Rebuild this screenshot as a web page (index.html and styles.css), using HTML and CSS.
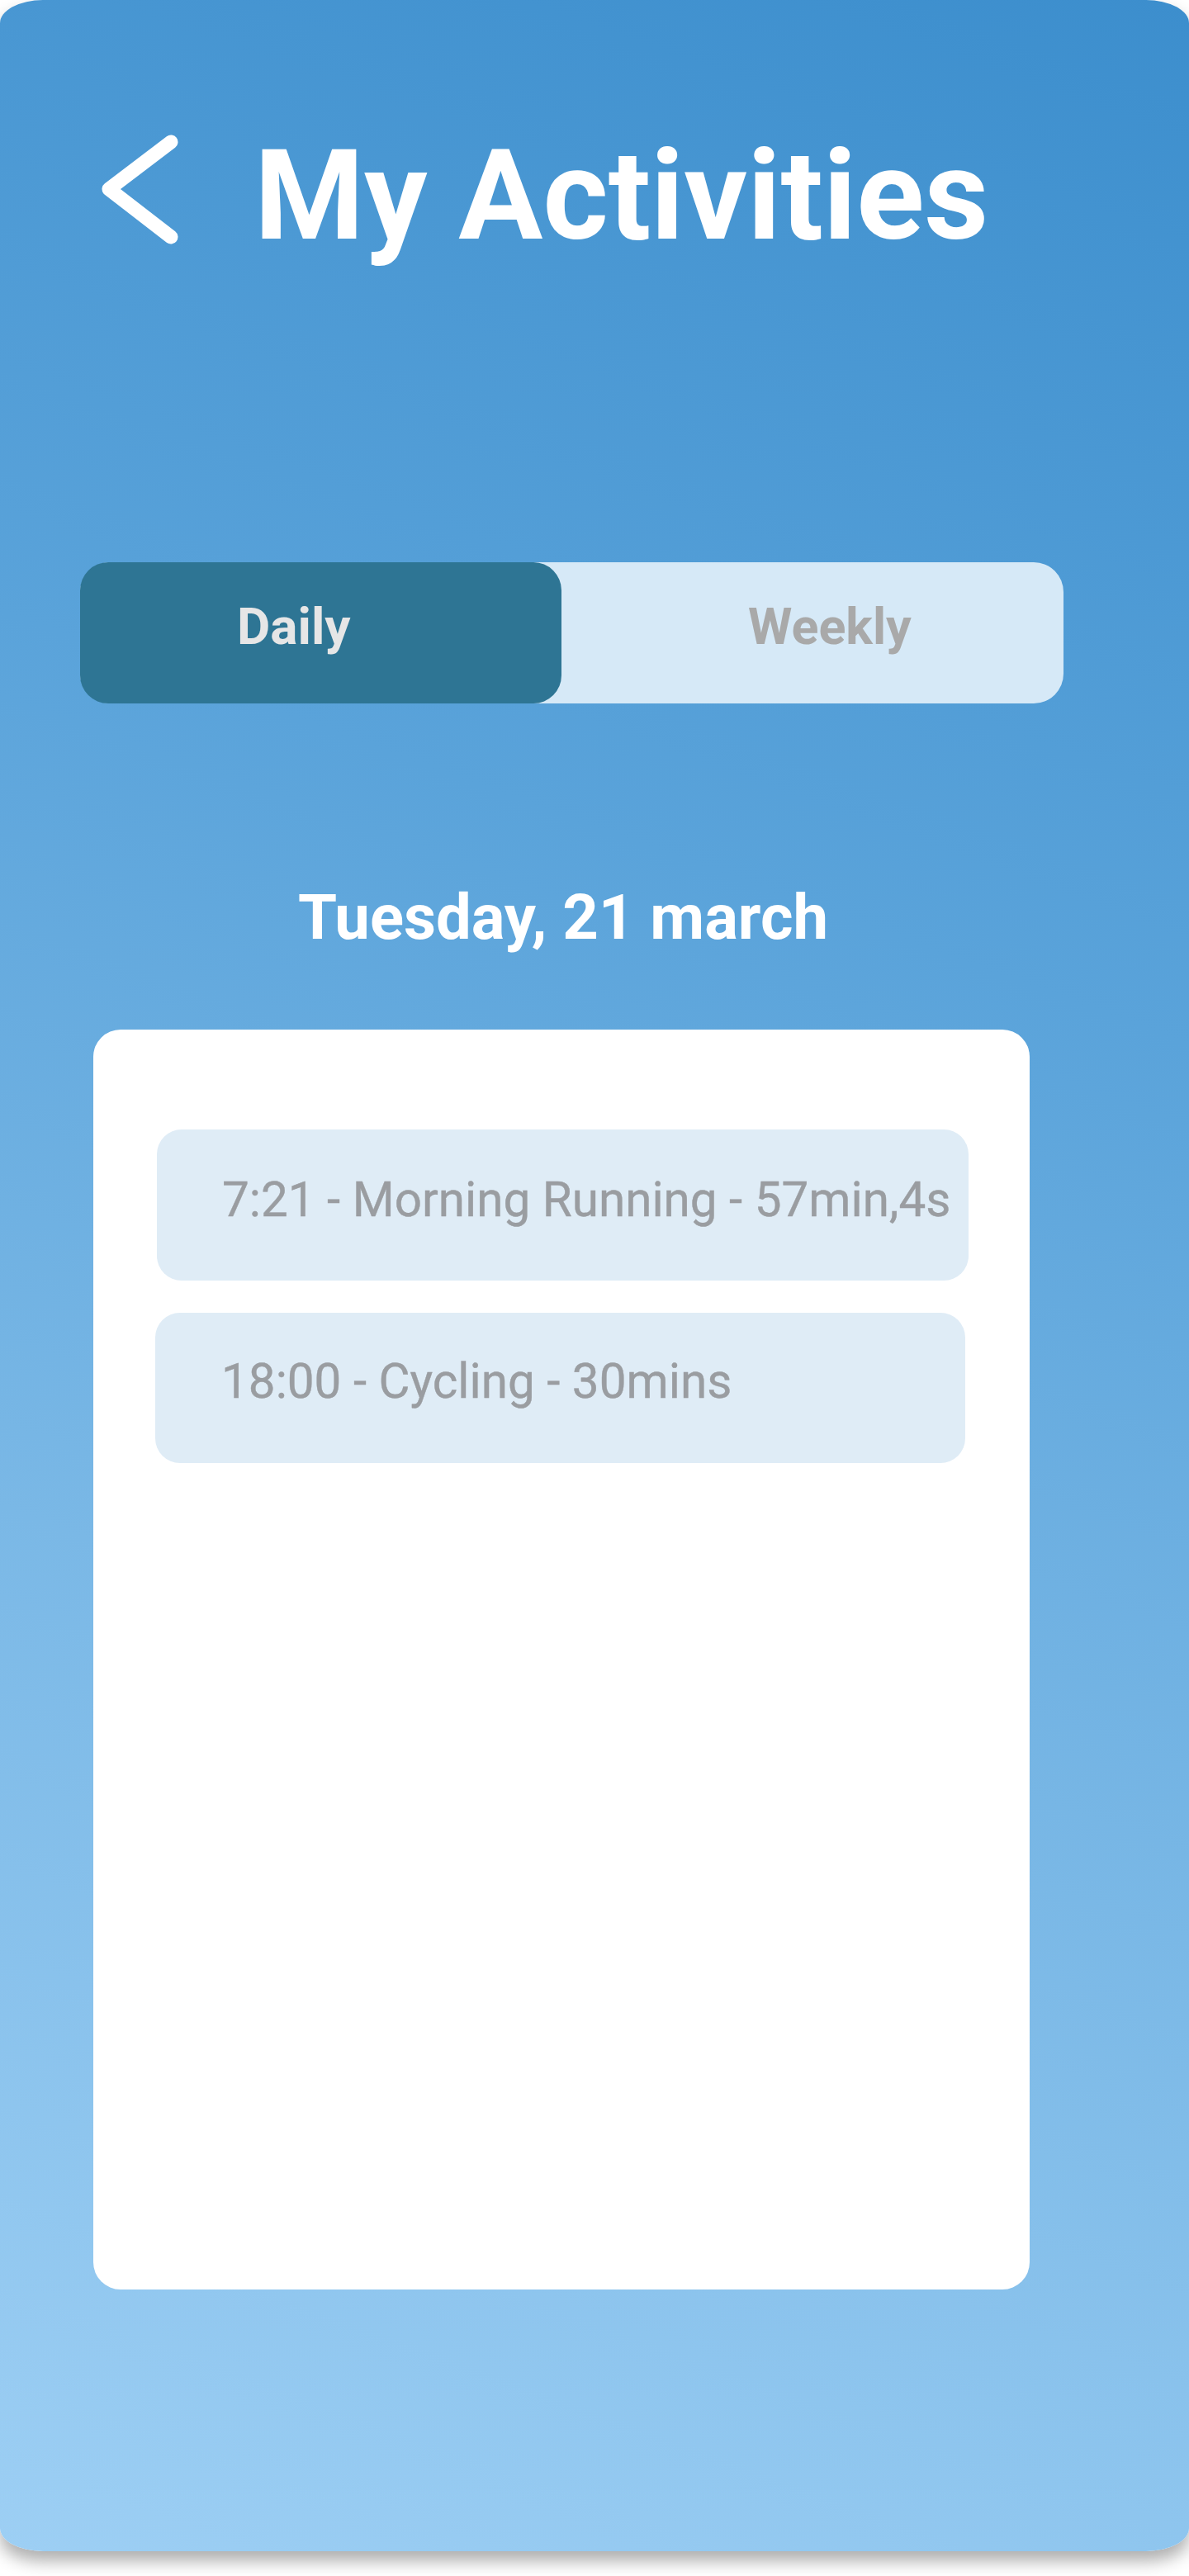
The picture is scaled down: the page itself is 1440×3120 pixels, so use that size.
FILE: index.html
```html
<!DOCTYPE html>
<html lang="en">
<head>
<meta charset="utf-8">
<title>My Activities</title>
<link rel="stylesheet" href="styles.css">
</head>
<body>
<div class="screen">
  <header class="topbar">
    <svg class="back" width="100" height="140" viewBox="0 0 100 140" aria-hidden="true">
      <path d="M89 12 L14 69 L89 127" fill="none" stroke="#ffffff" stroke-width="17" stroke-linecap="round" stroke-linejoin="round"/>
    </svg>
    <h1 class="title">My Activities</h1>
  </header>

  <div class="toggle">
    <div class="seg seg-daily">Daily</div>
    <div class="seg seg-weekly">Weekly</div>
  </div>

  <h2 class="date">Tuesday, 21 march</h2>

  <section class="card">
    <div class="item item-first">7:21 - Morning Running - 57min,4s</div>
    <div class="item item-second">18:00 - Cycling - 30mins</div>
  </section>
</div>
</body>
</html>
```

FILE: styles.css
```css
html, body {
  margin: 0;
  padding: 0;
  background: #ffffff;
}

body {
  width: 1440px;
  height: 3120px;
  overflow: hidden;
  font-family: Roboto, "Liberation Sans", Arial, sans-serif;
}

.screen {
  width: 1440px;
  height: 3090px;
  box-sizing: border-box;
  border-radius: 52px / 28px;
  background: linear-gradient(200deg, #3c8ecd 0%, #5aa3da 35%, #7ab8e6 65%, #9dcff4 100%);
  box-shadow: 0 12px 20px rgba(0, 0, 0, 0.32);
  display: flex;
  flex-direction: column;
  align-items: flex-start;
}

.topbar {
  display: flex;
  align-items: flex-start;
  padding: 160px 0 0 118px;
}

.back {
  display: block;
  flex: none;
}

.title {
  margin: 1px 0 0 90px;
  font-size: 152px;
  line-height: 152px;
  font-weight: 700;
  color: #ffffff;
  white-space: nowrap;
}

.toggle {
  margin: 368px 0 0 97px;
  width: 1191px;
  height: 171px;
  border-radius: 36px;
  background: #d6e9f7;
  display: flex;
}

.seg {
  height: 171px;
  box-sizing: border-box;
  display: flex;
  align-items: center;
  padding-bottom: 16px;
  font-size: 62px;
  font-weight: 700;
  line-height: 62px;
}

.seg-daily {
  width: 583px;
  flex: none;
  padding-left: 190px;
  border-radius: 34px;
  background: #2e7594;
  color: #e6e6e6;
}

.seg-weekly {
  flex: 1;
  padding-left: 226px;
  font-size: 61px;
  color: #a9a9a9;
}

.date {
  margin: 221px 0 0 361px;
  font-size: 76px;
  line-height: 76px;
  font-weight: 700;
  color: #ffffff;
  white-space: nowrap;
}

.card {
  margin: 98px 0 0 113px;
  width: 1134px;
  height: 1526px;
  box-sizing: border-box;
  padding: 121px 0 0 77px;
  border-radius: 33px;
  background: #ffffff;
  display: flex;
  flex-direction: column;
  gap: 39px;
}

.item {
  width: 983px;
  height: 183px;
  box-sizing: border-box;
  padding: 56px 0 0 79px;
  border-radius: 30px;
  background: #dfecf6;
  color: #9a9da1;
  font-size: 58.4px;
  line-height: 59px;
  font-weight: 400;
  -webkit-text-stroke: 0.4px #9a9da1;
  white-space: nowrap;
}

.item-second {
  width: 981px;
  height: 182px;
  margin-left: -2px;
  padding-top: 54px;
  padding-left: 80px;
}
```
